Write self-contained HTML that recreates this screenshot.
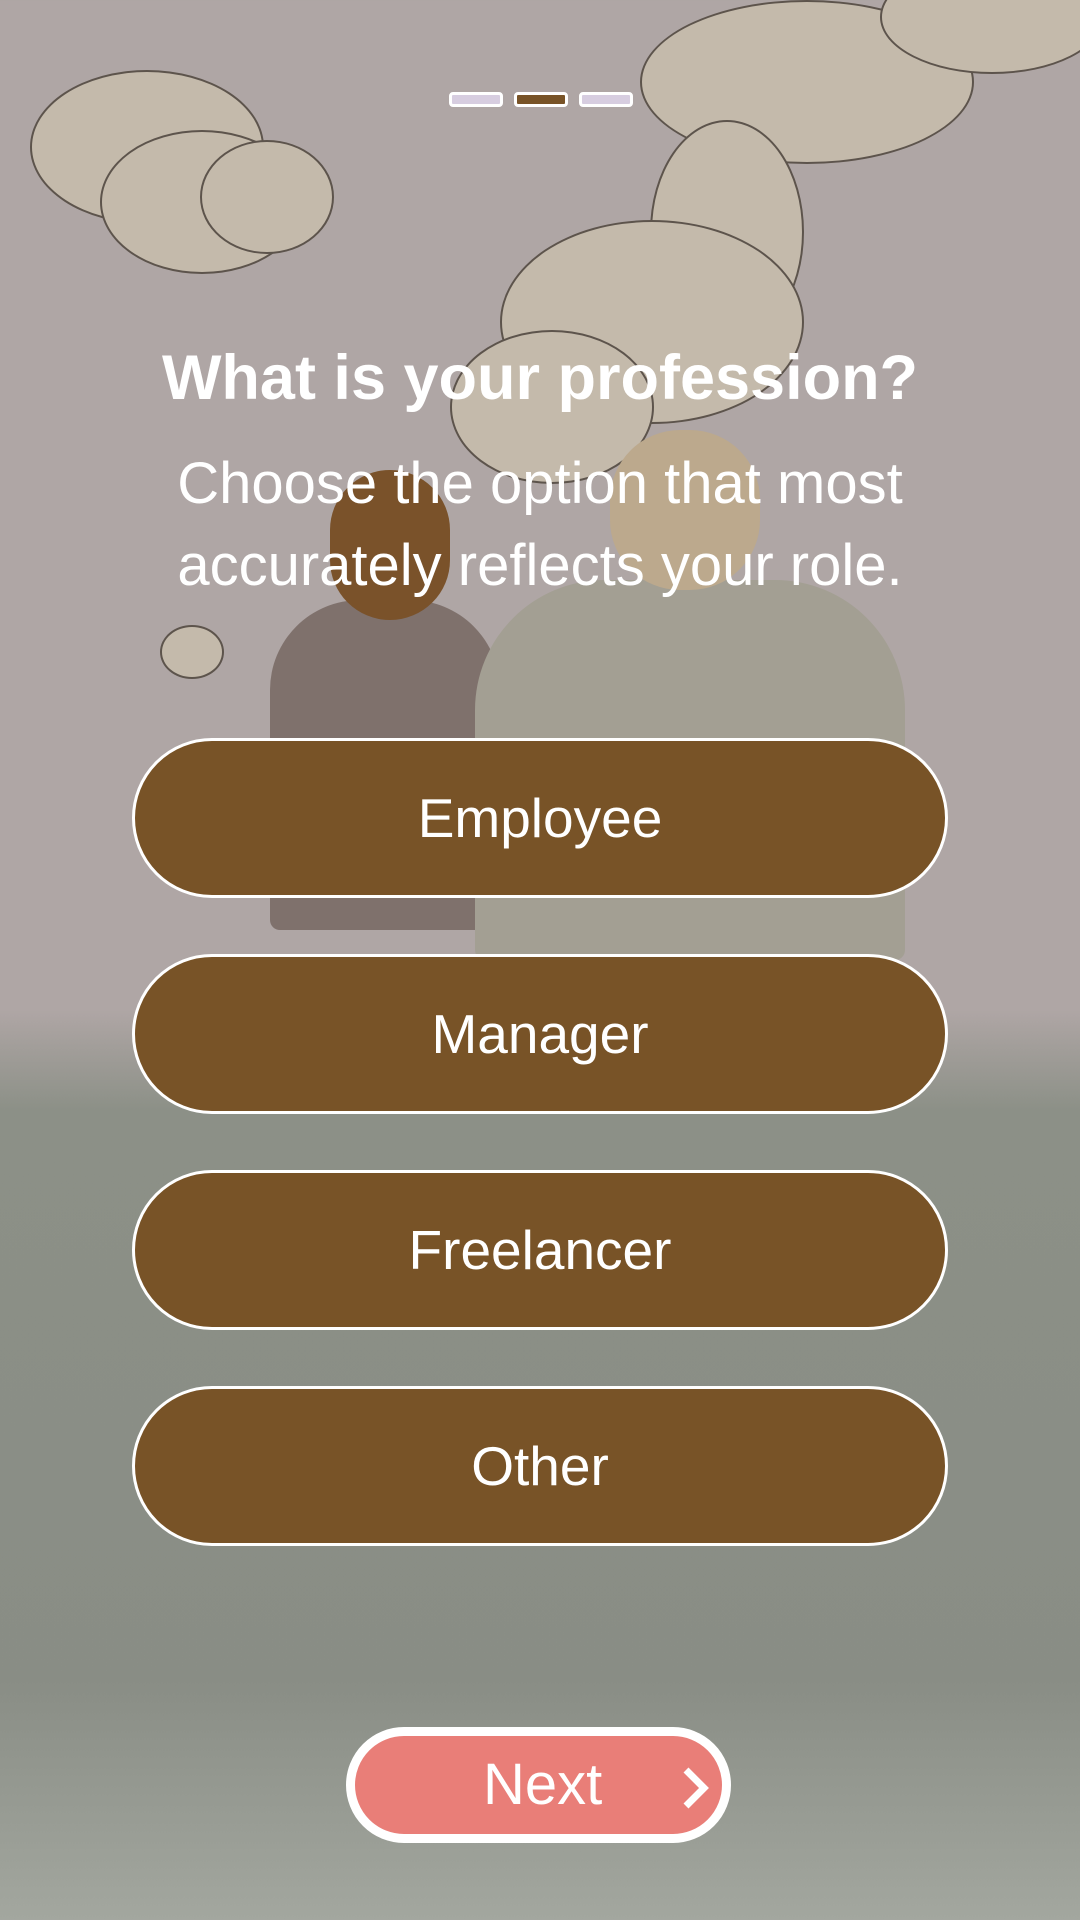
<!DOCTYPE html>
<html><head><meta charset="utf-8"><style>
html,body{margin:0;padding:0}
body{width:1080px;height:1920px;position:relative;overflow:hidden;font-family:"Liberation Sans",sans-serif;
background:linear-gradient(180deg,#afa6a5 0px,#afa6a5 1010px,#8c9087 1110px,#898d85 1680px,#a3a79f 1920px);}
.cl{position:absolute;background:#c4baab;border:2px solid #5d544c;border-radius:50%}
.bar{position:absolute;top:92px;width:48px;height:9px;border:3px solid #fff;border-radius:4px;background:#d7cde0}
h1{position:absolute;top:342px;left:0;width:1080px;text-align:center;margin:0;color:#fff;font-size:63px;font-weight:bold}
.sub{position:absolute;top:443px;left:0;width:1080px;text-align:center;color:#fff;font-size:58px;line-height:82px}
.btn{position:absolute;left:132px;width:810px;height:154px;border:3px solid #fff;border-radius:80px;background:#785327;color:#fff;font-size:55px;text-align:center;line-height:154px}
.next{position:absolute;left:346px;top:1727px;width:367px;height:98px;border:9px solid #fff;border-radius:60px;background:#e97e78;color:#fff;font-size:58px;line-height:98px}
</style></head><body>
<div class="cl" style="left:30px;top:70px;width:230px;height:150px"></div>
<div class="cl" style="left:100px;top:130px;width:200px;height:140px"></div>
<div class="cl" style="left:200px;top:140px;width:130px;height:110px"></div>
<div class="cl" style="left:640px;top:0px;width:330px;height:160px"></div>
<div class="cl" style="left:880px;top:-40px;width:220px;height:110px"></div>
<div class="cl" style="left:650px;top:120px;width:150px;height:220px"></div>
<div class="cl" style="left:500px;top:220px;width:300px;height:200px"></div>
<div class="cl" style="left:450px;top:330px;width:200px;height:150px"></div>
<div class="cl" style="left:160px;top:625px;width:60px;height:50px"></div>
<div style="position:absolute;left:270px;top:600px;width:230px;height:330px;background:#7f716c;border-radius:90px 90px 10px 10px"></div>
<div style="position:absolute;left:475px;top:580px;width:430px;height:380px;background:#a39f93;border-radius:130px 130px 10px 10px"></div>
<div style="position:absolute;left:330px;top:470px;width:120px;height:150px;background:#7a522a;border-radius:60px"></div>
<div style="position:absolute;left:610px;top:430px;width:150px;height:160px;background:#bca98d;border-radius:70px"></div>
<div class="bar" style="left:449px"></div>
<div class="bar" style="left:514px;background:#785327"></div>
<div class="bar" style="left:579px"></div>
<h1>What is your profession?</h1>
<div class="sub">Choose the option that most<br>accurately reflects your role.</div>
<div class="btn" style="top:738px">Employee</div>
<div class="btn" style="top:954px">Manager</div>
<div class="btn" style="top:1170px">Freelancer</div>
<div class="btn" style="top:1386px">Other</div>
<div class="next"><span style="position:absolute;left:128px">Next</span>
<svg style="position:absolute;left:326px;top:30px" width="30" height="44" viewBox="0 0 30 44"><path d="M5 4 L23 22 L5 40" fill="none" stroke="#fff" stroke-width="7"/></svg></div>
</body></html>
